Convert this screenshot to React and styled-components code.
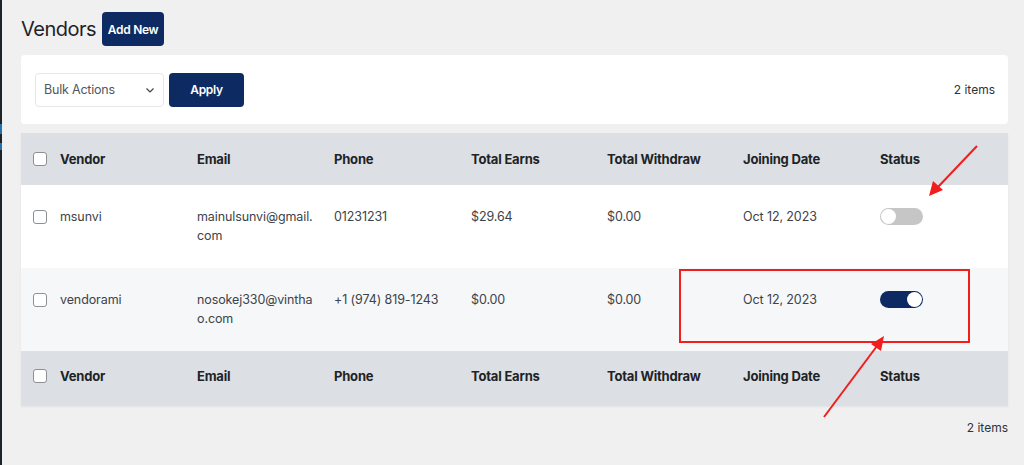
import styled, { createGlobalStyle } from 'styled-components';

const GlobalStyle = createGlobalStyle`
    html, body {
        margin: 0;
        padding: 0;
        background: #f0f0f1;
        font-family: Inter, "Liberation Sans", sans-serif;
        color: #1d2327;
    }
`;

const Page = styled.div`
    position: relative;
    display: flex;
    min-height: 465px;
    overflow: hidden;
`;

const SideEdge = styled.div`
    width: 2px;
    flex-shrink: 0;
    background: linear-gradient(
        to bottom,
        #1d2327 0,
        #1d2327 124px,
        #2271b1 124px,
        #2271b1 134px,
        #1d2327 134px,
        #1d2327 143px,
        #2271b1 143px,
        #2271b1 150px,
        #1d2327 150px
    );
`;

const Content = styled.div`
    flex: 1;
    padding: 12px 16px 0 19px;
`;

const TitleRow = styled.div`
    display: flex;
    align-items: center;
    gap: 6px;
    height: 34px;
`;

const Title = styled.h1`
    margin: 0;
    font-size: 20px;
    font-weight: 400;
    letter-spacing: -0.5px;
    color: #1d2327;
`;

const NavyButton = styled.button`
    background: #0e2a62;
    border: none;
    border-radius: 4px;
    color: #fff;
    font-family: inherit;
    font-weight: 600;
    font-size: 12px;
    letter-spacing: -0.3px;
    height: 34px;
    width: ${(props) => props.w}px;
    padding: 0;
    cursor: pointer;
`;

const Panel = styled.div`
    margin-top: 9px;
    background: #fff;
    border-radius: 4px;
    height: 69px;
    padding: 0 13px 0 14px;
    display: flex;
    align-items: center;
    gap: 5px;
`;

const SelectBox = styled.div`
    width: 129px;
    height: 34px;
    box-sizing: border-box;
    border: 1px solid #e6e7e9;
    border-radius: 4px;
    display: flex;
    align-items: center;
    justify-content: space-between;
    padding: 0 7px 0 8px;
    font-size: 12.5px;
    letter-spacing: -0.2px;
    color: #50575e;
`;

const Count = styled.div`
    margin-left: auto;
    font-size: 12px;
    color: #2c3338;
`;

const Table = styled.table`
    margin-top: 9px;
    width: 100%;
    border-collapse: collapse;
    table-layout: fixed;
    box-shadow: 0 1px 2px rgba(0, 0, 0, 0.06);
`;

const HeadRow = styled.tr`
    background: #dcdfe3;
    height: ${(props) => props.h || 52}px;
`;

const Th = styled.th`
    text-align: left;
    font-size: 13px;
    font-weight: 700;
    letter-spacing: -0.2px;
    color: #1d2327;
    padding: 0 12px ${(props) => (props.foot ? 5 : 1)}px 0;
    vertical-align: middle;
`;

const BodyRow = styled.tr`
    background: ${(props) => (props.alt ? '#f6f7f8' : '#fff')};
`;

const Td = styled.td`
    font-size: 12.5px;
    line-height: 19px;
    letter-spacing: -0.1px;
    color: #3c434a;
    padding: 22px 20px 23px 0;
    vertical-align: top;
    word-break: break-all;
`;

const CheckCell = styled.td`
    padding: ${(props) => (props.head ? `0 0 ${props.foot ? 5 : 1}px 12px` : '25px 0 0 12px')};
    vertical-align: ${(props) => (props.head ? 'middle' : 'top')};
`;

const Check = styled.span`
    display: block;
    width: 14px;
    height: 14px;
    box-sizing: border-box;
    border: 1px solid #8c8f94;
    border-radius: 3px;
    background: #fff;
`;

const Toggle = styled.span`
    display: block;
    position: relative;
    margin-top: 1px;
    width: 43px;
    height: 17px;
    border-radius: 9px;
    background: ${(props) => (props.on ? '#0e2a62' : '#c6c6c6')};

    &::after {
        content: '';
        position: absolute;
        top: 1px;
        left: ${(props) => (props.on ? '27px' : '1px')};
        width: 15px;
        height: 15px;
        border-radius: 50%;
        background: #fff;
    }
`;

const Bottom = styled.div`
    display: flex;
    justify-content: flex-end;
    padding-top: 14px;
    font-size: 12px;
    color: #2c3338;
`;

const Marks = styled.svg`
    position: absolute;
    left: 0;
    top: 0;
    pointer-events: none;
`;

const columns = ['Vendor', 'Email', 'Phone', 'Total Earns', 'Total Withdraw', 'Joining Date', 'Status'];
const widths = [137, 137, 137, 136, 136, 137, 128];

const vendors = [
    { name: 'msunvi', email: 'mainulsunvi@gmail.com', phone: '01231231', earns: '$29.64', withdraw: '$0.00', date: 'Oct 12, 2023', on: false },
    { name: 'vendorami', email: 'nosokej330@vinthao.com', phone: '+1 (974) 819-1243', earns: '$0.00', withdraw: '$0.00', date: 'Oct 12, 2023', on: true },
];

const HeaderCells = ({ foot }) => (
    <>
        <CheckCell head foot={foot}><Check /></CheckCell>
        {columns.map((c) => <Th key={c} foot={foot}>{c}</Th>)}
    </>
);

const App = () => {
    return (
        <>
            <GlobalStyle />
            <Page>
                <SideEdge />
                <Content>
                    <TitleRow>
                        <Title>Vendors</Title>
                        <NavyButton w={62}>Add New</NavyButton>
                    </TitleRow>
                    <Panel>
                        <SelectBox>
                            Bulk Actions
                            <svg width="12" height="12" viewBox="0 0 12 12">
                                <path d="M2.5 4.5 6 8l3.5-3.5" fill="none" stroke="#3c434a" strokeWidth="1.2" />
                            </svg>
                        </SelectBox>
                        <NavyButton w={75}>Apply</NavyButton>
                        <Count>2 items</Count>
                    </Panel>
                    <Table>
                        <colgroup>
                            <col style={{ width: 39 }} />
                            {widths.map((w, i) => <col key={i} style={{ width: w }} />)}
                        </colgroup>
                        <thead>
                            <HeadRow><HeaderCells /></HeadRow>
                        </thead>
                        <tbody>
                            {vendors.map((v, i) => (
                                <BodyRow key={v.name} alt={i % 2 === 1}>
                                    <CheckCell><Check /></CheckCell>
                                    <Td>{v.name}</Td>
                                    <Td>{v.email}</Td>
                                    <Td>{v.phone}</Td>
                                    <Td>{v.earns}</Td>
                                    <Td>{v.withdraw}</Td>
                                    <Td>{v.date}</Td>
                                    <Td><Toggle on={v.on} /></Td>
                                </BodyRow>
                            ))}
                        </tbody>
                        <tfoot>
                            <HeadRow h={55}><HeaderCells foot /></HeadRow>
                        </tfoot>
                    </Table>
                    <Bottom>2 items</Bottom>
                </Content>
                <Marks width="1024" height="465" viewBox="0 0 1024 465">
                    <rect x="680" y="270" width="289" height="72" fill="none" stroke="#f21d1d" strokeWidth="2" />
                    <line x1="977" y1="146" x2="938" y2="187" stroke="#f21d1d" strokeWidth="2" />
                    <polygon points="929,196 933,181 943,190" fill="#f21d1d" />
                    <line x1="824" y1="417" x2="877" y2="346" stroke="#f21d1d" strokeWidth="2" />
                    <polygon points="884,336 881,351 871,344" fill="#f21d1d" />
                </Marks>
            </Page>
        </>
    );
};

export default App;
